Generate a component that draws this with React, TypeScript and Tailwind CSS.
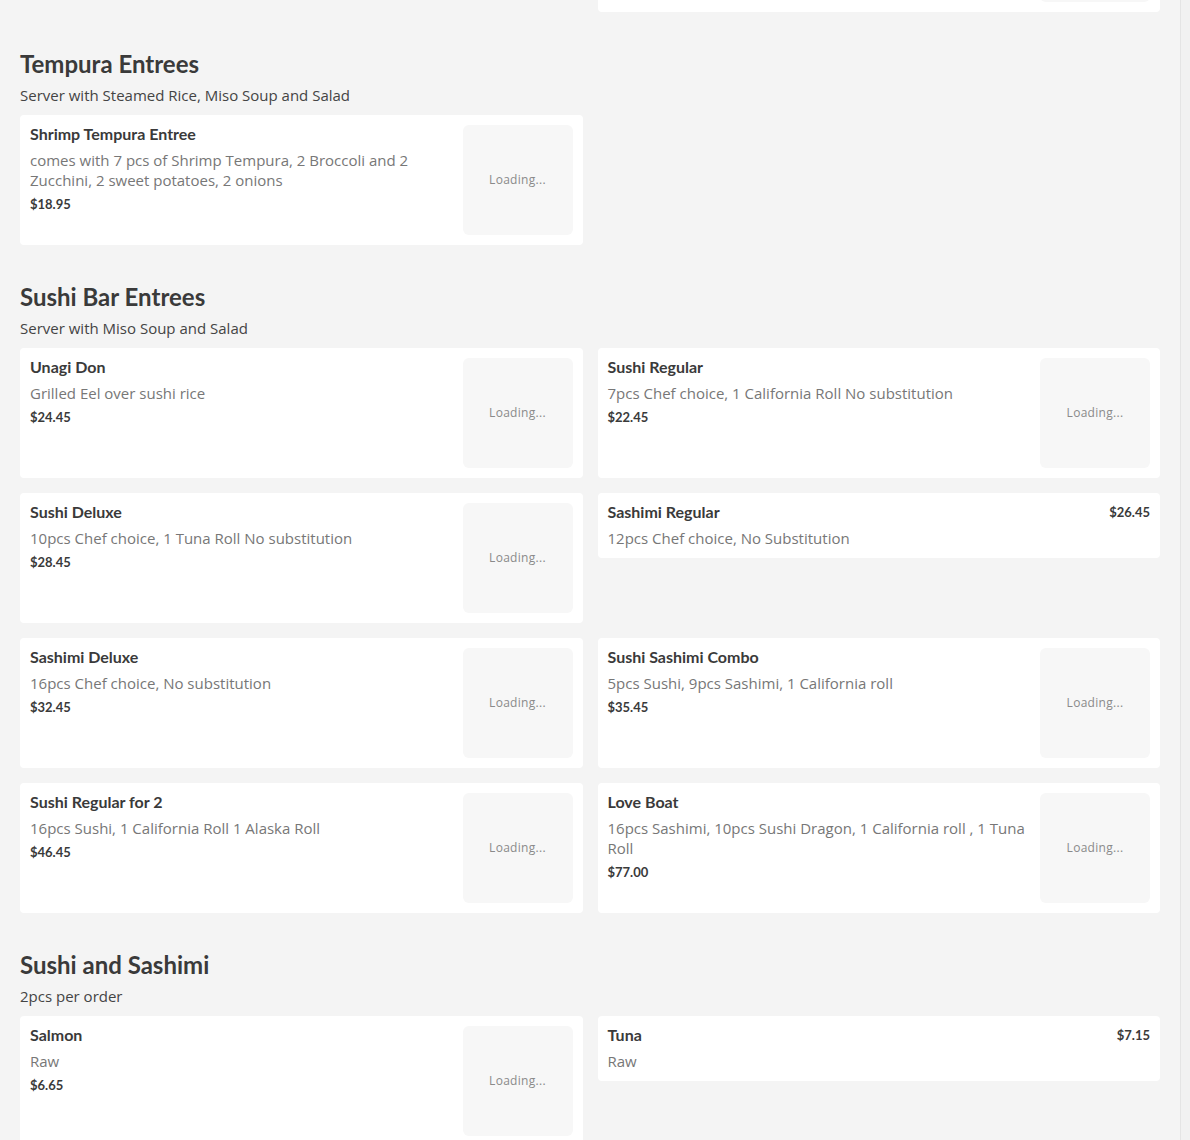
import React from "react";

type Item = {
  name: string;
  desc: string;
  price: string;
  image?: boolean;
};

type Section = {
  title: string;
  sub: string;
  items: Item[];
};

const sections: Section[] = [
  {
    title: "Tempura Entrees",
    sub: "Server with Steamed Rice, Miso Soup and Salad",
    items: [
      {
        name: "Shrimp Tempura Entree",
        desc: "comes with 7 pcs of Shrimp Tempura, 2 Broccoli and 2 Zucchini, 2 sweet potatoes, 2 onions",
        price: "$18.95",
        image: true,
      },
    ],
  },
  {
    title: "Sushi Bar Entrees",
    sub: "Server with Miso Soup and Salad",
    items: [
      { name: "Unagi Don", desc: "Grilled Eel over sushi rice", price: "$24.45", image: true },
      {
        name: "Sushi Regular",
        desc: "7pcs Chef choice, 1 California Roll No substitution",
        price: "$22.45",
        image: true,
      },
      {
        name: "Sushi Deluxe",
        desc: "10pcs Chef choice, 1 Tuna Roll No substitution",
        price: "$28.45",
        image: true,
      },
      { name: "Sashimi Regular", desc: "12pcs Chef choice, No Substitution", price: "$26.45" },
      {
        name: "Sashimi Deluxe",
        desc: "16pcs Chef choice, No substitution",
        price: "$32.45",
        image: true,
      },
      {
        name: "Sushi Sashimi Combo",
        desc: "5pcs Sushi, 9pcs Sashimi, 1 California roll",
        price: "$35.45",
        image: true,
      },
      {
        name: "Sushi Regular for 2",
        desc: "16pcs Sushi, 1 California Roll 1 Alaska Roll",
        price: "$46.45",
        image: true,
      },
      {
        name: "Love Boat",
        desc: "16pcs Sashimi, 10pcs Sushi Dragon, 1 California roll , 1 Tuna Roll",
        price: "$77.00",
        image: true,
      },
    ],
  },
  {
    title: "Sushi and Sashimi",
    sub: "2pcs per order",
    items: [
      { name: "Salmon", desc: "Raw", price: "$6.65", image: true },
      { name: "Tuna", desc: "Raw", price: "$7.15" },
    ],
  },
];

const titleFont = { fontFamily: "Lato, 'Open Sans', sans-serif" };
const bodyFont = { fontFamily: "'Open Sans', 'Noto Sans', sans-serif" };

function Placeholder() {
  return (
    <div className="flex h-[110px] w-[110px] shrink-0 items-center justify-center rounded-md bg-[#f7f7f7]">
      <span className="text-[12px] tracking-[0.3px] text-[#8a8a8a]" style={bodyFont}>
        Loading...
      </span>
    </div>
  );
}

function ItemCard({ item }: { item: Item }) {
  return (
    <div className="flex rounded-[4px] bg-white p-[10px]">
      <div className={item.image ? "min-w-0 flex-1 pr-[12px]" : "min-w-0 flex-1"}>
        <div className="flex items-start justify-between">
          <p
            className="text-[16px] font-bold leading-[18px] text-[#3a3a3a]"
            style={titleFont}
          >
            {item.name}
          </p>
          {!item.image && (
            <p
              className="text-[13px] font-bold leading-[18px] text-[#3a3a3a]"
              style={titleFont}
            >
              {item.price}
            </p>
          )}
        </div>
        <p
          className="mt-[7px] text-[15px] leading-[20px] text-[#777]"
          style={bodyFont}
        >
          {item.desc}
        </p>
        {item.image && (
          <p
            className="mt-[5px] text-[13px] font-bold leading-[18px] text-[#3a3a3a]"
            style={titleFont}
          >
            {item.price}
          </p>
        )}
      </div>
      {item.image && <Placeholder />}
    </div>
  );
}

function MenuSection({ section }: { section: Section }) {
  return (
    <div className="pt-[37px]">
      <h2
        className="text-[24px] font-bold leading-[30px] text-[#3a3a3a]"
        style={titleFont}
      >
        {section.title}
      </h2>
      <p
        className="mt-[6px] text-[15px] leading-[20px] text-[#444]"
        style={bodyFont}
      >
        {section.sub}
      </p>
      <div className="mt-[10px] grid grid-cols-2 items-start gap-[15px]">
        {section.items.map((item) => (
          <ItemCard key={item.name} item={item} />
        ))}
      </div>
    </div>
  );
}

export default function App() {
  return (
    <div className="flex h-[1140px] w-full overflow-hidden bg-[#f4f4f4]">
      <div className="flex-1 overflow-hidden px-5">
        <div className="-mt-[118px]">
          {/* tail of the previous section, scrolled mostly out of view */}
          <div className="grid grid-cols-2 items-start gap-[15px]">
            <div />
            <div className="flex h-[130px] justify-end rounded-[4px] bg-white p-[10px]">
              <div className="h-[110px] w-[110px] rounded-md bg-[#f7f7f7]" />
            </div>
          </div>
          {sections.map((s) => (
            <MenuSection key={s.title} section={s} />
          ))}
        </div>
      </div>
      <div className="w-[10px] shrink-0 border-l border-[#e4e4e4] bg-[#f1f1f1]" />
    </div>
  );
}
